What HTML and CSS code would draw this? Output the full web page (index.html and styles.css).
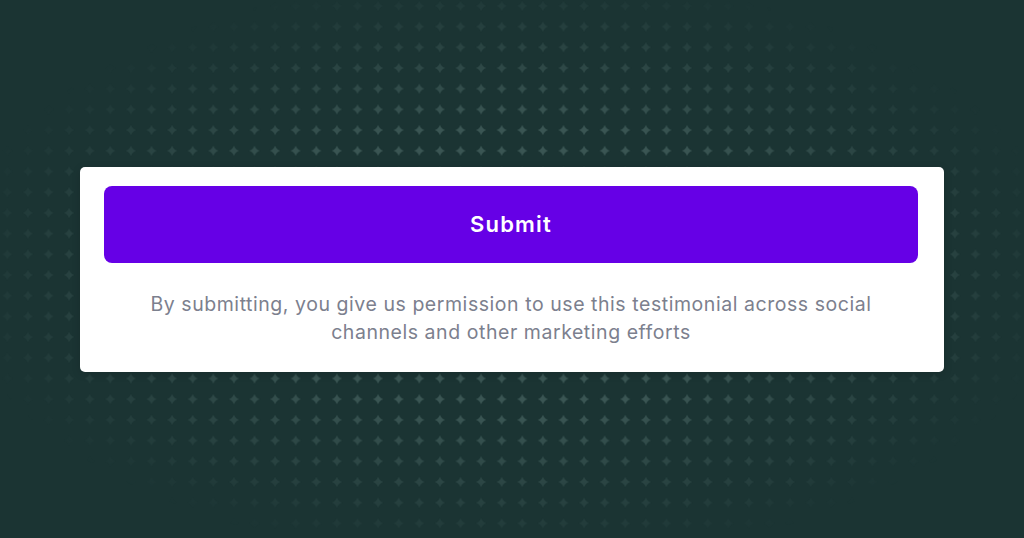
FILE: index.html
```html
<!DOCTYPE html>
<html lang="en">
<head>
  <meta charset="UTF-8" />
  <meta name="viewport" content="width=device-width, initial-scale=1.0"/>
  <title>Submit Testimonial</title>
  <link rel="stylesheet" href="styles.css">
</head>
<body>

  <svg class="stars" width="1024" height="538" aria-hidden="true">
    <defs>
      <path id="spark" d="M0,-5.2 Q1.2,-1.2 5.2,0 Q1.2,1.2 0,5.2 Q-1.2,1.2 -5.2,0 Q-1.2,-1.2 0,-5.2Z" fill="#3a5553"/>
      <pattern id="star" x="7.3" y="5.9" width="20.6" height="20.7" patternUnits="userSpaceOnUse">
        <use href="#spark"/>
        <use href="#spark" x="20.6"/>
        <use href="#spark" y="20.7"/>
        <use href="#spark" x="20.6" y="20.7"/>
      </pattern>
    </defs>
    <rect width="1024" height="538" fill="url(#star)"/>
  </svg>

  <div class="card">
    <button class="submit-btn" type="button">Submit</button>
    <p class="consent">By submitting, you give us permission to use this testimonial across social channels and other marketing efforts</p>
  </div>

</body>
</html>
```

FILE: styles.css
```css
* { box-sizing: border-box; }

html, body {
  height: 100%;
}

body {
  margin: 0;
  background: #1b3433;
  font-family: Inter, "Noto Sans", sans-serif;
  display: flex;
  align-items: center;
  justify-content: center;
  overflow: hidden;
}

.stars {
  position: absolute;
  top: 0;
  left: 0;
  -webkit-mask-image: radial-gradient(ellipse 560px 295px at 50% 50%, #000 50%, transparent 100%);
  mask-image: radial-gradient(ellipse 560px 295px at 50% 50%, #000 50%, transparent 100%);
}

.card {
  position: relative;
  width: 864px;
  background: #fff;
  border-radius: 5px;
  padding: 19px 26px 26px 24px;
  box-shadow: 0 2px 8px rgba(0, 0, 0, 0.15);
  text-align: center;
}

.submit-btn {
  display: block;
  width: 100%;
  height: 77px;
  background: #6600e6;
  color: #fff;
  border: none;
  border-radius: 8px;
  font-family: inherit;
  font-size: 22px;
  font-weight: 600;
  letter-spacing: 1.2px;
  cursor: pointer;
}

.consent {
  margin: 27px auto 0;
  max-width: 760px;
  color: #7c808e;
  font-size: 19.5px;
  letter-spacing: 0.55px;
  line-height: 28px;
}
```
